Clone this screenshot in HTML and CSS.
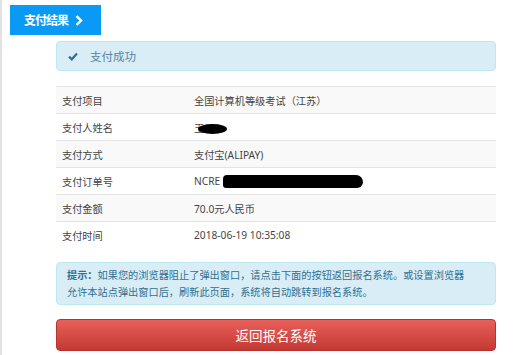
FILE: index.html
```html
<!DOCTYPE html>
<html lang="zh-CN">
<head>
<meta charset="utf-8">
<title>支付结果</title>
<link rel="stylesheet" href="styles.css">
</head>
<body>
<div class="page">
  <div class="tab"><span class="tab-text">支付结果</span><svg class="chev" width="8" height="11" viewBox="0 0 8 11"><path d="M1.5 1.2 L6 5.5 L1.5 9.8" fill="none" stroke="#fff" stroke-width="2.4"/></svg></div>
  <div class="content">
    <div class="alert success">
      <svg class="check" width="10" height="9" viewBox="0 0 10 9"><path d="M1 4.6 L3.8 7.3 L9 1.6" fill="none" stroke="#31708f" stroke-width="2.2"/></svg>
      <span>支付成功</span>
    </div>
    <div class="table">
      <div class="row odd"><div class="k">支付项目</div><div class="v">全国计算机等级考试（江苏）</div></div>
      <div class="row"><div class="k">支付人姓名</div><div class="v">王<span class="blob name"></span></div></div>
      <div class="row odd"><div class="k">支付方式</div><div class="v">支付宝(ALIPAY)</div></div>
      <div class="row"><div class="k">支付订单号</div><div class="v">NCRE<span class="blob order"></span></div></div>
      <div class="row odd"><div class="k">支付金额</div><div class="v">70.0元人民币</div></div>
      <div class="row"><div class="k">支付时间</div><div class="v">2018-06-19 10:35:08</div></div>
    </div>
    <div class="alert tip"><b>提示：</b>如果您的浏览器阻止了弹出窗口，请点击下面的按钮返回报名系统。或设置浏览器<br>允许本站点弹出窗口后，刷新此页面，系统将自动跳转到报名系统。</div>
    <div class="btn">返回报名系统</div>
  </div>
</div>
</body>
</html>
```
FILE: styles.css
```css
html, body { margin: 0; padding: 0; background: #fff; }
body { font-family: "Noto Sans", "Noto Sans CJK SC", sans-serif; }
.page {
  border-left: 2px solid #e2e2e2;
  min-height: 355px;
  box-sizing: border-box;
  padding-top: 5px;
}
.tab {
  margin-left: 8px;
  width: 91px;
  height: 30px;
  box-sizing: border-box;
  background: #0a9af6;
  color: #fff;
  font-weight: bold;
  font-size: 12px;
  padding-left: 14px;
  display: flex;
  align-items: center;
  gap: 7px;
}
.tab-text { letter-spacing: -1px; }
.chev { display: block; }
.content {
  margin-left: 54px;
  width: 440px;
}
.alert {
  background: #d9edf7;
  border: 1px solid #bce8f1;
  border-radius: 4px;
  color: #31708f;
  box-sizing: border-box;
}
.success {
  margin-top: 6px;
  height: 30px;
  display: flex;
  align-items: center;
  padding-left: 11px;
  font-size: 11.5px;
  color: #58849f;
}
.check { display: block; margin-right: 12px; }
.table {
  margin-top: 15px;
  font-size: 10.2px;
  color: #444;
}
.row {
  display: flex;
  height: 27px;
  box-sizing: border-box;
  border-top: 1px solid #e4e4e4;
  align-items: center;
}
.row.odd { background: #f9f9f9; }
.k { width: 138px; padding-left: 6px; box-sizing: border-box; }
.v { display: flex; align-items: center; }
.blob { display: inline-block; background: #000; }
.blob.name { width: 29px; height: 10px; border-radius: 50%; margin-left: -6px; margin-top: 3px; }
.blob.order { width: 140px; height: 13px; border-radius: 4px 7px 6px 3px; margin-left: 3px; margin-top: 1px; }
.tip {
  margin-top: 14px;
  font-size: 10.2px;
  line-height: 17px;
  padding: 4px 10px 3px;
}
.tip b { font-weight: bold; }
.btn {
  margin-top: 14px;
  height: 32px;
  border-radius: 4px;
  background: linear-gradient(#e9605b, #c33a35);
  border: 1px solid #b8332e;
  box-sizing: border-box;
  color: #fff;
  font-size: 13.5px;
  display: flex;
  align-items: center;
  justify-content: center;
}
```
